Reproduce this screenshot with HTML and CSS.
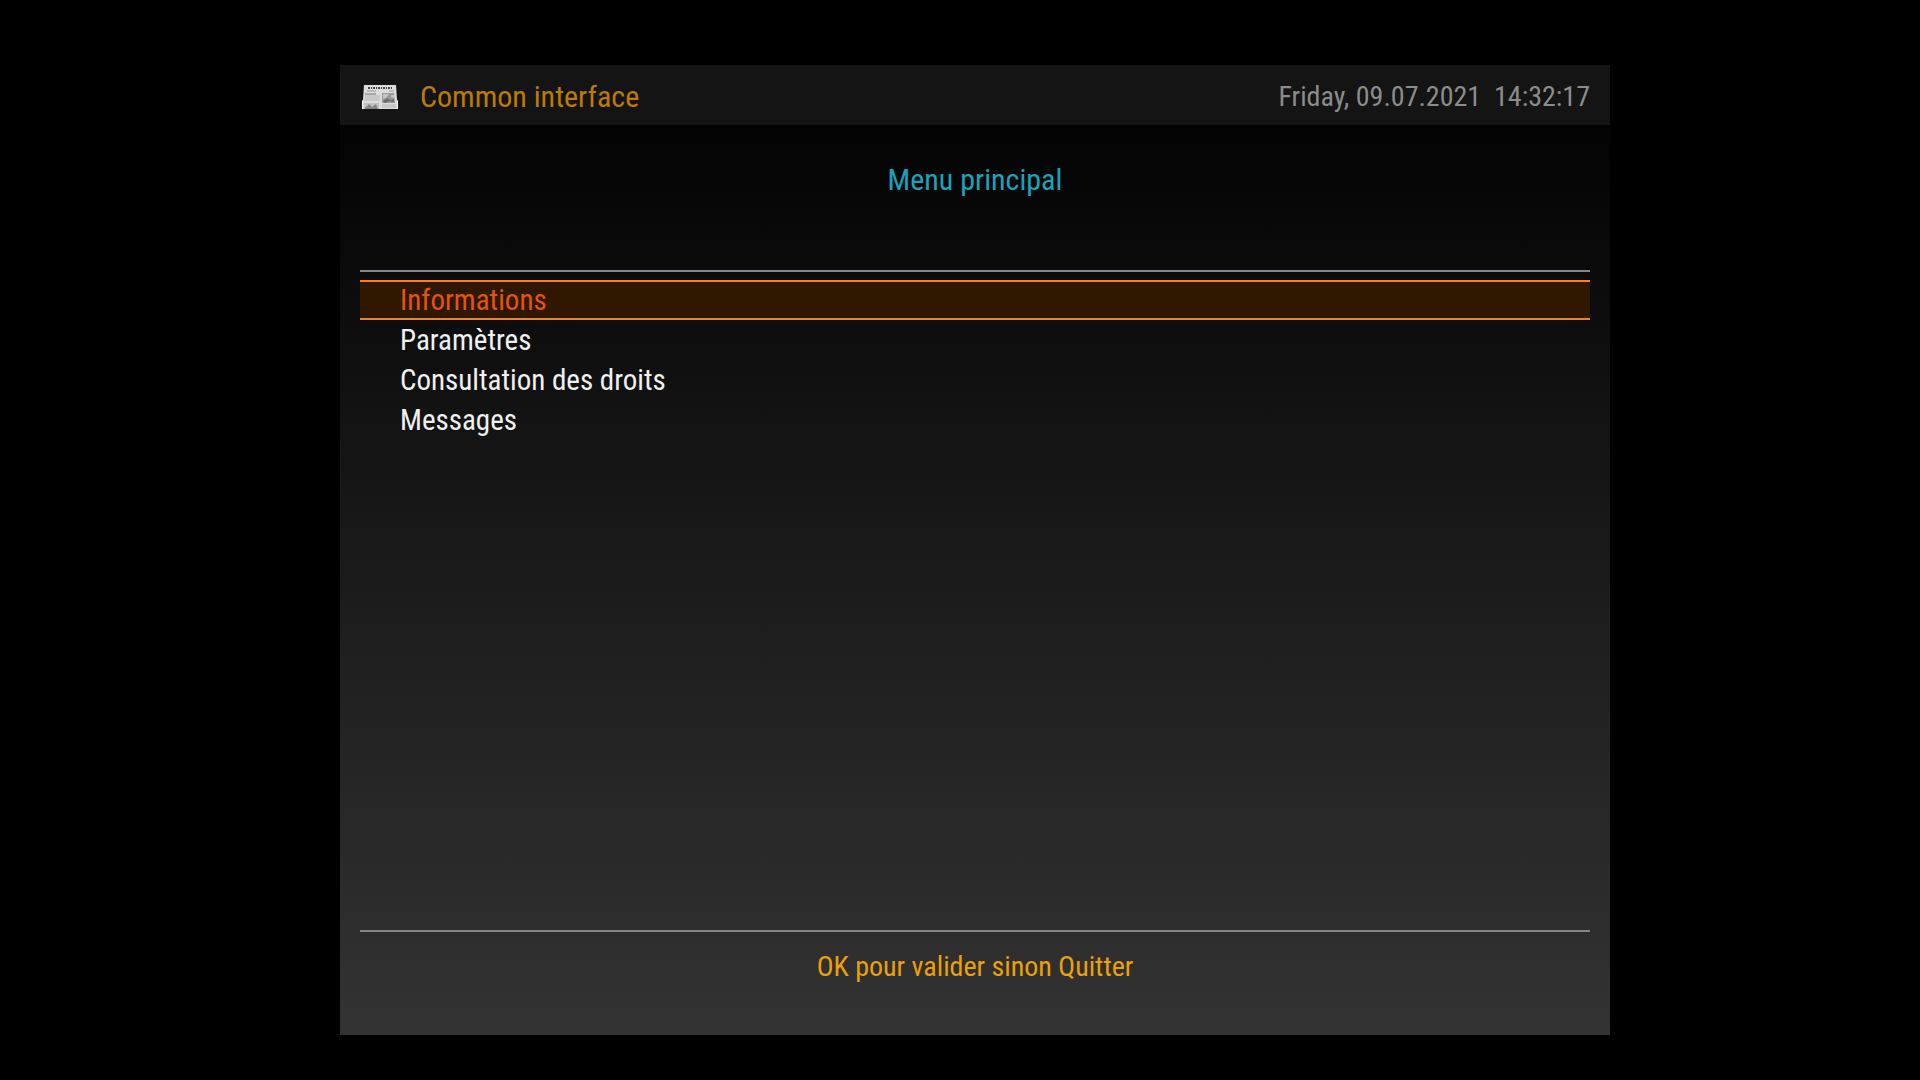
FILE: index.html
```html
<!DOCTYPE html>
<html lang="fr">
<head>
    <meta charset="UTF-8">
    <meta name="viewport" content="width=device-width, initial-scale=1.0">
    <title>Common interface</title>
    <link rel="stylesheet" href="styles.css">
</head>
<body>
    <main class="panel">
        <header class="titlebar">
            <svg class="icon" viewBox="0 0 36 24" aria-hidden="true">
                <path d="M2 0H34L35 15L36 16V24H0V16L1 15Z" fill="#dcdcdc"/>
                <path d="M0 16L1 15V24H0ZM35 15L36 16V24H35Z" fill="#f5f5f5"/>
                <path d="M6 3H31" stroke="#444" stroke-width="2" stroke-dasharray="2 1 1 1"/>
                <path d="M5 6H14M27 6H32" stroke="#999" stroke-width="1"/>
                <path d="M3 9H14" stroke="#777" stroke-width="1"/>
                <path d="M3 11H18M3 13H18M2 15H18M20 20H34M20 22H34M2 22H5" stroke="#b4b4b4" stroke-width="1"/>
                <path d="M20 8H32L33 18H20Z" fill="#999"/>
                <path d="M21 9H27L24 13L21 14ZM29 10H32V13L29 12Z" fill="#c4c4c4"/>
                <path d="M21 16L25 13L28 15L32 14V17L27 16L23 18Z" fill="#6c6c6c"/>
                <path d="M2 18H17V24H2Z" fill="#c0c0c0"/>
                <path d="M3 23L7 19L10 22L14 19L16 24H3Z" fill="#858585"/>
            </svg>
            <h1>Common interface</h1>
            <time datetime="2021-07-09T14:32:17">Friday, 09.07.2021&nbsp; 14:32:17</time>
        </header>
        <h2>Menu principal</h2>
        <nav class="menu">
            <a class="active" href="#informations">Informations</a>
            <a href="#parametres">Paramètres</a>
            <a href="#droits">Consultation des droits</a>
            <a href="#messages">Messages</a>
        </nav>
        <footer>OK pour valider sinon Quitter</footer>
    </main>
</body>
</html>
```
FILE: styles.css
```css
* {
    box-sizing: border-box;
}
body {
    display: flex;
    min-height: 100vh;
    margin: 0;
    padding: 65px 310px 45px 340px;
    background: #000;
    color: #f0f0f0;
    font-family: "Roboto Condensed", Roboto, sans-serif;
    font-size: 29px;
    line-height: 40px;
}
.panel {
    flex: 1;
    display: flex;
    flex-direction: column;
    background: linear-gradient(#000, #333);
}
.titlebar {
    display: flex;
    align-items: center;
    padding: 12px 20px 8px;
    background: #141414;
}
.icon {
    width: 36px;
    height: 24px;
    margin: 0 22px 0 2px;
}
h1, h2 {
    margin: 0;
    font-size: 30px;
    font-weight: 400;
}
h1 {
    color: #bc7a0a;
}
time {
    margin-left: auto;
    color: #8c8c8c;
    font-size: 28px;
}
h2 {
    margin: 35px 20px 70px;
    color: #18a4bc;
    text-align: center;
}
.menu {
    flex: 1;
    display: flex;
    flex-direction: column;
    margin: 0 20px;
    padding-top: 8px;
    border-top: 2px solid #85858c;
    border-bottom: 2px solid #85858c;
}
.menu a {
    padding: 0 40px;
    color: inherit;
    text-decoration: none;
}
.menu .active {
    border-top: 2px solid #f5821e;
    border-bottom: 2px solid #f5821e;
    background: #301700;
    color: #e05510;
    line-height: 36px;
}
footer {
    padding: 15px 20px 48px;
    color: #eca00a;
    font-size: 28px;
    text-align: center;
}
```
